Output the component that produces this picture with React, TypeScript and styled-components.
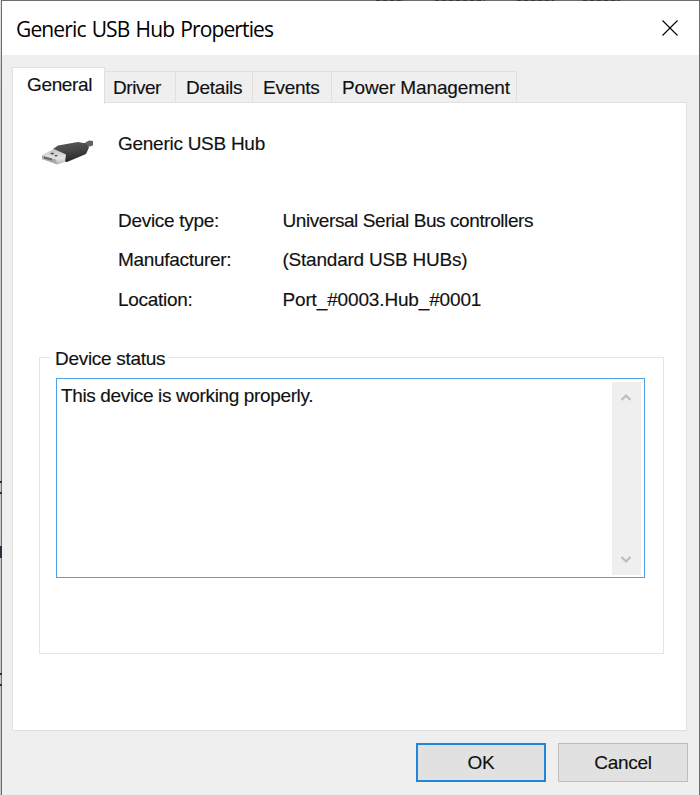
import React from 'react';
import styled, { createGlobalStyle } from 'styled-components';

const Global = createGlobalStyle`
  * { box-sizing: border-box; }
  body { margin: 0; background: #c9cccf; overflow: hidden; font-family: "Liberation Sans", Arial, sans-serif; }
  button { font: inherit; padding: 0; margin: 0; border: 0; background: none; }
`;

const Desktop = styled.div`
  position: relative;
  width: 700px;
  height: 795px;
  padding-left: 1px;
  background: linear-gradient(#e4e5e7, #c9cccf 90px, #c4c7ca);
`;

const Speck = styled.span<{ $y: number; $h: number }>`
  position: absolute;
  left: 0;
  top: ${(p) => p.$y}px;
  width: 2px;
  height: ${(p) => p.$h}px;
  background: #2b2f38;
`;

const MenuSliver = styled.span<{ $x: number; $w: number }>`
  position: absolute;
  left: ${(p) => p.$x}px;
  top: 0;
  width: ${(p) => p.$w}px;
  height: 1px;
  background: repeating-linear-gradient(90deg, #39393f 0 4px, #625f60 4px 7px);
`;

const Dialog = styled.section`
  height: 795px;
  display: flex;
  flex-direction: column;
  border: 1px solid #6b6c6e;
  border-bottom: 0;
  background: #efefef;
  color: #111;
`;

const TitleBar = styled.header`
  flex: none;
  height: 54px;
  display: flex;
  align-items: center;
  justify-content: space-between;
  padding: 0 21px 0 14px;
  background: #fff;
`;

const Title = styled.h1`
  margin: 1px 0 0;
  font: 400 21px/30px "Open Sans", "Noto Sans", sans-serif;
  letter-spacing: -0.87px;
  word-spacing: 1.5px;
  color: #000;
  white-space: nowrap;
`;

const CloseButton = styled.button`
  width: 16px;
  height: 16px;
  display: flex;
`;

const Text = styled.span<{ $track?: number }>`
  font-size: 19px;
  line-height: 22px;
  letter-spacing: ${(p) => p.$track ?? -0.3}px;
  -webkit-text-stroke: 0.15px currentColor;
  white-space: nowrap;
`;

const TabBar = styled.nav`
  flex: none;
  display: flex;
  align-items: flex-end;
  height: 47px;
  margin-left: 10px;
`;

const Tab = styled.button<{ $width: number; $inset?: number }>`
  width: ${(p) => p.$width}px;
  height: 31px;
  padding: 2px 0 0 ${(p) => p.$inset ?? 10}px;
  text-align: left;
  border: 1px solid #e0e0e0;
  border-width: 1px 1px 0 0;
  color: inherit;
`;

const ActiveTab = styled(Tab)`
  position: relative;
  height: 37px;
  margin-bottom: -2px;
  padding: 0 0 3px 14px;
  border-width: 1px 1px 0 1px;
  background: #fff;
`;

const Panel = styled.main`
  flex: none;
  width: 675px;
  height: 629px;
  margin-left: 10px;
  padding: 30px 22px 0 26px;
  border: 1px solid #e0e0e0;
  background: #fff;
`;

const Summary = styled.div`
  display: flex;
  height: 88px;
`;

const DeviceIcon = styled.svg`
  flex: none;
  width: 54px;
  height: 32px;
  margin: 5px 23px 0 2px;
`;

const Details = styled.dl`
  display: grid;
  grid-template-columns: 164.5px 1fr;
  grid-template-rows: 39px 40px 22px;
  margin: -11px 0 0 79px;
  height: 147px;
  align-content: start;
`;

const Term = styled.dt``;
const Value = styled.dd`
  margin: 0;
`;

const StatusGroup = styled.section`
  height: 297px;
  border: 1px solid #e5e5e5;
  padding: 0 18px 0 16px;
`;

const Legend = styled.div`
  width: max-content;
  height: 22px;
  margin: -11px 0 9px -6px;
  padding: 1px 3px 0 5px;
  background: #fff;
`;

const StatusBox = styled.div`
  display: flex;
  width: 589px;
  height: 200px;
  border: 1px solid #50a0e4;
  padding: 3px 3px 2px 4px;
  justify-content: space-between;
`;

const StatusText = styled.div`
  padding-top: 3px;
`;

const Scrollbar = styled.div`
  width: 29px;
  height: 193px;
  display: flex;
  flex-direction: column;
  justify-content: space-between;
  align-items: center;
  padding: 10px 1px 10px 0;
  background: #efefef;
`;

const Chevron = styled.svg`
  width: 12px;
  height: 10px;
`;

const Footer = styled.footer`
  display: flex;
  justify-content: flex-end;
  gap: 12px;
  padding: 12px 11px 0 0;
`;

const Action = styled.button<{ $primary?: boolean }>`
  width: 130px;
  height: 39px;
  padding-top: 1px;
  border: ${(p) => (p.$primary ? '2px solid #2186d8' : '1px solid #bdbdbd')};
  background: #e1e1e1;
  color: inherit;
`;

const tabs = [
  { label: 'Driver', width: 71, inset: 8, track: -0.45 },
  { label: 'Details', width: 77, inset: 10, track: -0.25 },
  { label: 'Events', width: 79, inset: 10, track: -0.25 },
  { label: 'Power Management', width: 185, inset: 10, track: -0.13 },
];

const details = [
  { term: 'Device type:', value: 'Universal Serial Bus controllers', track: -0.42 },
  { term: 'Manufacturer:', value: '(Standard USB HUBs)', track: -0.22 },
  { term: 'Location:', value: 'Port_#0003.Hub_#0001', track: -0.15 },
];

const menuSlivers = [
  { x: 376, w: 28 },
  { x: 435, w: 50 },
  { x: 517, w: 37 },
  { x: 583, w: 37 },
];

export default function App() {
  return (
    <Desktop>
      <Global />
      <Dialog>
        <TitleBar>
          <Title>Generic USB Hub Properties</Title>
          <CloseButton aria-label="Close">
            <svg width="16" height="16" viewBox="0 0 16 16">
              <path d="M.5.5l15 15M15.5.5l-15 15" stroke="#000" strokeWidth="1.1" />
            </svg>
          </CloseButton>
        </TitleBar>
        <TabBar>
          <ActiveTab $width={93}><Text $track={-0.35}>General</Text></ActiveTab>
          {tabs.map((t) => (
            <Tab key={t.label} $width={t.width} $inset={t.inset}><Text $track={t.track}>{t.label}</Text></Tab>
          ))}
        </TabBar>
        <Panel>
          <Summary>
            <DeviceIcon viewBox="0 0 54 32">
              <defs>
                <linearGradient id="body" x1="0" y1="0" x2="0.3" y2="1">
                  <stop offset="0" stopColor="#5b5b5b" />
                  <stop offset="0.5" stopColor="#484848" />
                  <stop offset="1" stopColor="#292929" />
                </linearGradient>
                <linearGradient id="metal" x1="0" y1="0" x2="0" y2="1">
                  <stop offset="0" stopColor="#c2c2c2" />
                  <stop offset="0.6" stopColor="#e4e4e4" />
                  <stop offset="1" stopColor="#b4b4b4" />
                </linearGradient>
              </defs>
              <path d="M42 6l6-3.500 4 .5v4.500l-7 2z" fill="#626262" />
              <path d="M12 11l5-3.500 20-3.500 8 1.500 3 4-3 6.500-19 8-5-1z" fill="url(#body)" />
              <path d="M1 17l12-6 12 5.500-1 7.500-8 2.500L1 21z" fill="url(#metal)" />
              <path d="M1 17.500l14 4 1 4.500L1 21z" fill="#a8a8a8" />
              <path d="M3 18.500l8 2v2l-8-2z" fill="#666" />
              <path d="M9 15.500l2-1 2.500 1-2 1.200zM13 17.700l2-1 2 .9-2 1.100z" fill="#555" />
            </DeviceIcon>
            <Text $track={-0.27}>Generic USB Hub</Text>
          </Summary>
          <Details>
            {details.map((d) => (
              <React.Fragment key={d.term}>
                <Term><Text>{d.term}</Text></Term>
                <Value><Text $track={d.track}>{d.value}</Text></Value>
              </React.Fragment>
            ))}
          </Details>
          <StatusGroup>
            <Legend><Text>Device status</Text></Legend>
            <StatusBox>
              <StatusText><Text $track={-0.36}>This device is working properly.</Text></StatusText>
              <Scrollbar>
                <Chevron viewBox="0 0 12 10">
                  <path d="M1.500 8L6 3.500 10.500 8" fill="none" stroke="#bdbdbd" strokeWidth="2.200" />
                </Chevron>
                <Chevron viewBox="0 0 12 10">
                  <path d="M1.500 2L6 6.500 10.500 2" fill="none" stroke="#bdbdbd" strokeWidth="2.200" />
                </Chevron>
              </Scrollbar>
            </StatusBox>
          </StatusGroup>
        </Panel>
        <Footer>
          <Action $primary><Text>OK</Text></Action>
          <Action><Text>Cancel</Text></Action>
        </Footer>
      </Dialog>
      {menuSlivers.map((m) => <MenuSliver key={m.x} $x={m.x} $w={m.w} />)}
      <Speck $y={481} $h={2} />
      <Speck $y={492} $h={2} />
      <Speck $y={546} $h={12} />
      <Speck $y={673} $h={2} />
      <Speck $y={684} $h={2} />
    </Desktop>
  );
}
